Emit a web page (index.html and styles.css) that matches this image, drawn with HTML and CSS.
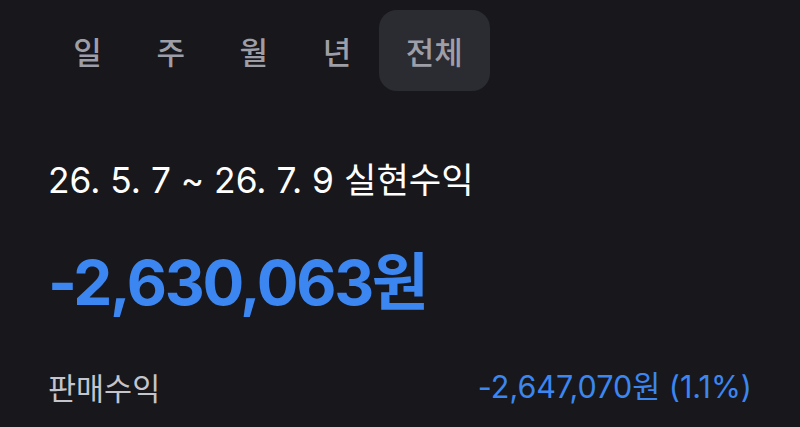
FILE: index.html
```html
<!DOCTYPE html>
<html lang="ko">
<head>
<meta charset="utf-8">
<link rel="stylesheet" href="styles.css">
</head>
<body>
<div class="page">
  <nav class="tabs">
    <span class="tab">일</span>
    <span class="tab">주</span>
    <span class="tab">월</span>
    <span class="tab">년</span>
    <span class="tab active">전체</span>
  </nav>
  <div class="content">
    <div class="title">26. 5. 7 ~ 26. 7. 9 실현수익</div>
    <div class="amount">-2,630,063원</div>
    <div class="row">
      <span class="label">판매수익</span>
      <span class="value">-2,647,070원 (1.1%)</span>
    </div>
  </div>
</div>
</body>
</html>
```
FILE: styles.css
```css
html, body {
  margin: 0;
  padding: 0;
  background: #17171c;
}
body {
  width: 800px;
  height: 427px;
  overflow: hidden;
  font-family: "Inter", "Noto Sans CJK KR", sans-serif;
}
.page {
  display: flex;
  flex-direction: column;
}
.tabs {
  display: flex;
  margin: 10px 0 0 46px;
}
.tab {
  font-family: "Noto Sans CJK KR", sans-serif;
  font-size: 31px;
  font-weight: 500;
  color: #9e9ea7;
  height: 81px;
  line-height: 81px;
  padding: 0 27.3px;
  border-radius: 18px;
  flex-shrink: 0;
}
.tab.active {
  background: #2b2b32;
}
.content {
  display: flex;
  flex-direction: column;
  padding: 0 48px;
}
.title {
  margin-top: 70px;
  font-size: 35.3px;
  line-height: 40px;
  color: #ffffff;
}
.amount {
  margin-top: 47px;
  font-size: 62px;
  line-height: 70px;
  font-weight: 700;
  color: #3b86f0;
  letter-spacing: -2.3px;
}
.row {
  margin-top: 51px;
  display: flex;
  justify-content: space-between;
  align-items: center;
  line-height: 36px;
}
.label {
  font-family: "Noto Sans CJK KR", sans-serif;
  font-size: 30.5px;
  color: #c4c4cc;
}
.value {
  font-size: 30.5px;
  color: #3b86f0;
}
```
